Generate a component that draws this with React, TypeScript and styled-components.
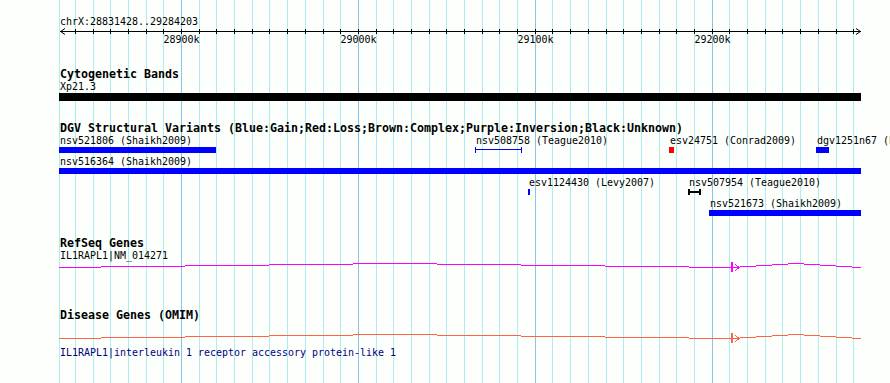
import styled, { createGlobalStyle } from "styled-components";

const GlobalStyle = createGlobalStyle`
  html, body {
    margin: 0;
    padding: 0;
    background: #fcfffc;
  }
`;

// genome -> pixel scale of the panel (28900k sits on x=181)
const bpToX = (bp: number) => Math.round(181 + (bp - 28900000) * 0.001769);

const gridBps: number[] = [];
for (let bp = 28840000; bp <= 29280000; bp += 10000) gridBps.push(bp);
const majorBps = [28900000, 29000000, 29100000, 29200000];

const Panel = styled.div`
  position: relative;
  width: 890px;
  height: 383px;
  overflow: hidden;
  background: #fcfffc;
`;

const GridLayer = styled.svg`
  position: absolute;
  left: 0;
  top: 0;
`;

const Tracks = styled.div`
  position: relative;
  display: flex;
  flex-direction: column;
`;

const Track = styled.section<{ $gap: number }>`
  display: flex;
  flex-direction: column;
  margin-top: ${(p) => p.$gap}px;
`;

const TrackTitle = styled.div`
  margin-left: 60px;
  font: bold 11.63px/12px "DejaVu Sans Mono", monospace;
  color: #000;
  white-space: pre;
`;

const Label = styled.div<{ $color?: string; $gap?: number }>`
  margin-left: 60px;
  margin-top: ${(p) => p.$gap || 0}px;
  font: 9.97px/13px "DejaVu Sans Mono", monospace;
  color: ${(p) => p.$color || "#000"};
  white-space: pre;
`;

const RulerLabel = styled(Label)`
  margin-top: 15px;
`;

const RulerCanvas = styled.div`
  position: relative;
  height: 20px;
`;

const TickLabel = styled.span`
  position: absolute;
  top: 5px;
  transform: translateX(-50%);
  font: 9.97px/13px "DejaVu Sans Mono", monospace;
  color: #000;
`;

const Band = styled.div`
  margin-left: 59px;
  width: 802px;
  height: 8px;
  background: #000;
`;

const Lane = styled.div<{ $h: number }>`
  position: relative;
  height: ${(p) => p.$h}px;
`;

const FeatureLabel = styled.span`
  position: absolute;
  font: 9.97px/13px "DejaVu Sans Mono", monospace;
  color: #000;
  white-space: pre;
`;

const Bar = styled.div<{ $color: string }>`
  position: absolute;
  height: 6px;
  background: ${(p) => p.$color};
`;

const Interval = styled.div<{ $color: string; $w: number }>`
  position: absolute;
  height: 6px;
  box-sizing: border-box;
  border-left: ${(p) => p.$w}px solid ${(p) => p.$color};
  border-right: ${(p) => p.$w}px solid ${(p) => p.$color};

  &::before {
    content: "";
    position: absolute;
    left: 0;
    right: 0;
    top: 2px;
    height: ${(p) => p.$w}px;
    background: ${(p) => p.$color};
  }
`;

const GeneSvg = styled.svg<{ $gap?: number }>`
  display: block;
  margin-top: ${(p) => p.$gap || 0}px;
`;

type Variant = {
  name: string;
  row: number;
  x: number;
  w: number;
  color: string;
  kind: "bar" | "interval";
};

const variants: Variant[] = [
  { name: "nsv521806 (Shaikh2009)", row: 0, x: 59, w: 157, color: "#0000ff", kind: "bar" },
  { name: "nsv508758 (Teague2010)", row: 0, x: 475, w: 47, color: "#0000ff", kind: "interval" },
  { name: "esv24751 (Conrad2009)", row: 0, x: 669, w: 5, color: "#ff0000", kind: "bar" },
  { name: "dgv1251n67 (Park2010)", row: 0, x: 816, w: 13, color: "#0000ff", kind: "bar" },
  { name: "nsv516364 (Shaikh2009)", row: 1, x: 59, w: 802, color: "#0000ff", kind: "bar" },
  { name: "esv1124430 (Levy2007)", row: 2, x: 528, w: 2, color: "#0000ff", kind: "bar" },
  { name: "nsv507954 (Teague2010)", row: 2, x: 688, w: 13, color: "#000000", kind: "interval" },
  { name: "nsv521673 (Shaikh2009)", row: 3, x: 709, w: 152, color: "#0000ff", kind: "bar" },
];

// the long intron is drawn as a shallow stepped hat, clipped to the view
const geneSteps: [number, number, number][] = [
  [59, 101, 5], [101, 185, 4], [185, 269, 3], [269, 353, 2], [353, 437, 1],
  [437, 521, 2], [521, 605, 3], [605, 689, 4], [689, 740, 5], [740, 756, 4],
  [756, 772, 3], [772, 788, 2], [788, 804, 1], [804, 820, 2], [820, 836, 3],
  [836, 852, 4], [852, 861, 5],
];

function GeneGlyph({ color, gap }: { color: string; gap?: number }) {
  return (
    <GeneSvg $gap={gap} width={890} height={11} shapeRendering="crispEdges">
      {geneSteps.map(([x1, x2, y]) => (
        <rect key={x1} x={x1} y={y} width={x2 - x1} height={1} fill={color} />
      ))}
      <rect x={731} y={0} width={2} height={10} fill={color} />
      <polyline
        points="735,2.5 739.5,5.5 735,8.5"
        fill="none"
        stroke={color}
        strokeWidth={1}
      />
    </GeneSvg>
  );
}

export default function App() {
  return (
    <Panel>
      <GlobalStyle />
      <GridLayer width={890} height={383} shapeRendering="crispEdges">
        <rect x={59} y={0} width={1} height={383} fill="#afeeee" />
        {gridBps.map((bp) => (
          <rect
            key={bp}
            x={bpToX(bp)}
            y={0}
            width={1}
            height={383}
            fill={bp % 100000 === 0 ? "#87c6e2" : "#afeeee"}
          />
        ))}
      </GridLayer>

      <Tracks>
        <RulerLabel>chrX:28831428..29284203</RulerLabel>
        <RulerCanvas>
          <svg width={890} height={20} style={{ position: "absolute", left: 0, top: 0 }}>
            <rect x={60} y={3} width={801} height={1} fill="#000" shapeRendering="crispEdges" />
            <polyline points="65,0.5 60.5,3.5 65,6.5" fill="none" stroke="#000" />
            <polyline points="856,0.5 860.5,3.5 856,6.5" fill="none" stroke="#000" />
            {gridBps.map((bp) => (
              <rect
                key={bp}
                x={bpToX(bp)}
                y={1}
                width={1}
                height={5}
                fill="#000"
                shapeRendering="crispEdges"
              />
            ))}
          </svg>
          {majorBps.map((bp) => (
            <TickLabel key={bp} style={{ left: bpToX(bp) + 0.5 }}>
              {bp / 1000}k
            </TickLabel>
          ))}
        </RulerCanvas>

        <Track $gap={20}>
          <TrackTitle>Cytogenetic Bands</TrackTitle>
          <Label>Xp21.3</Label>
          <Band />
        </Track>

        <Track $gap={21}>
          <TrackTitle>
            DGV Structural Variants (Blue:Gain;Red:Loss;Brown:Complex;Purple:Inversion;Black:Unknown)
          </TrackTitle>
          <Lane $h={84}>
            {variants.map((v) => (
              <div key={v.name}>
                <FeatureLabel style={{ left: v.x + 1, top: v.row * 21 }}>{v.name}</FeatureLabel>
                {v.kind === "bar" ? (
                  <Bar $color={v.color} style={{ left: v.x, width: v.w, top: v.row * 21 + 13 }} />
                ) : (
                  <Interval
                    $color={v.color}
                    $w={v.color === "#000000" ? 2 : 1}
                    style={{ left: v.x, width: v.w, top: v.row * 21 + 13 }}
                  />
                )}
              </div>
            ))}
          </Lane>
        </Track>

        <Track $gap={19}>
          <TrackTitle>RefSeq Genes</TrackTitle>
          <Label>IL1RAPL1|NM_014271</Label>
          <GeneGlyph color="#ff00ff" />
        </Track>

        <Track $gap={36}>
          <TrackTitle>Disease Genes (OMIM)</TrackTitle>
          <GeneGlyph color="#ff6347" gap={12} />
          <Label $color="#000080" $gap={2}>
            IL1RAPL1|interleukin 1 receptor accessory protein-like 1
          </Label>
        </Track>
      </Tracks>
    </Panel>
  );
}
